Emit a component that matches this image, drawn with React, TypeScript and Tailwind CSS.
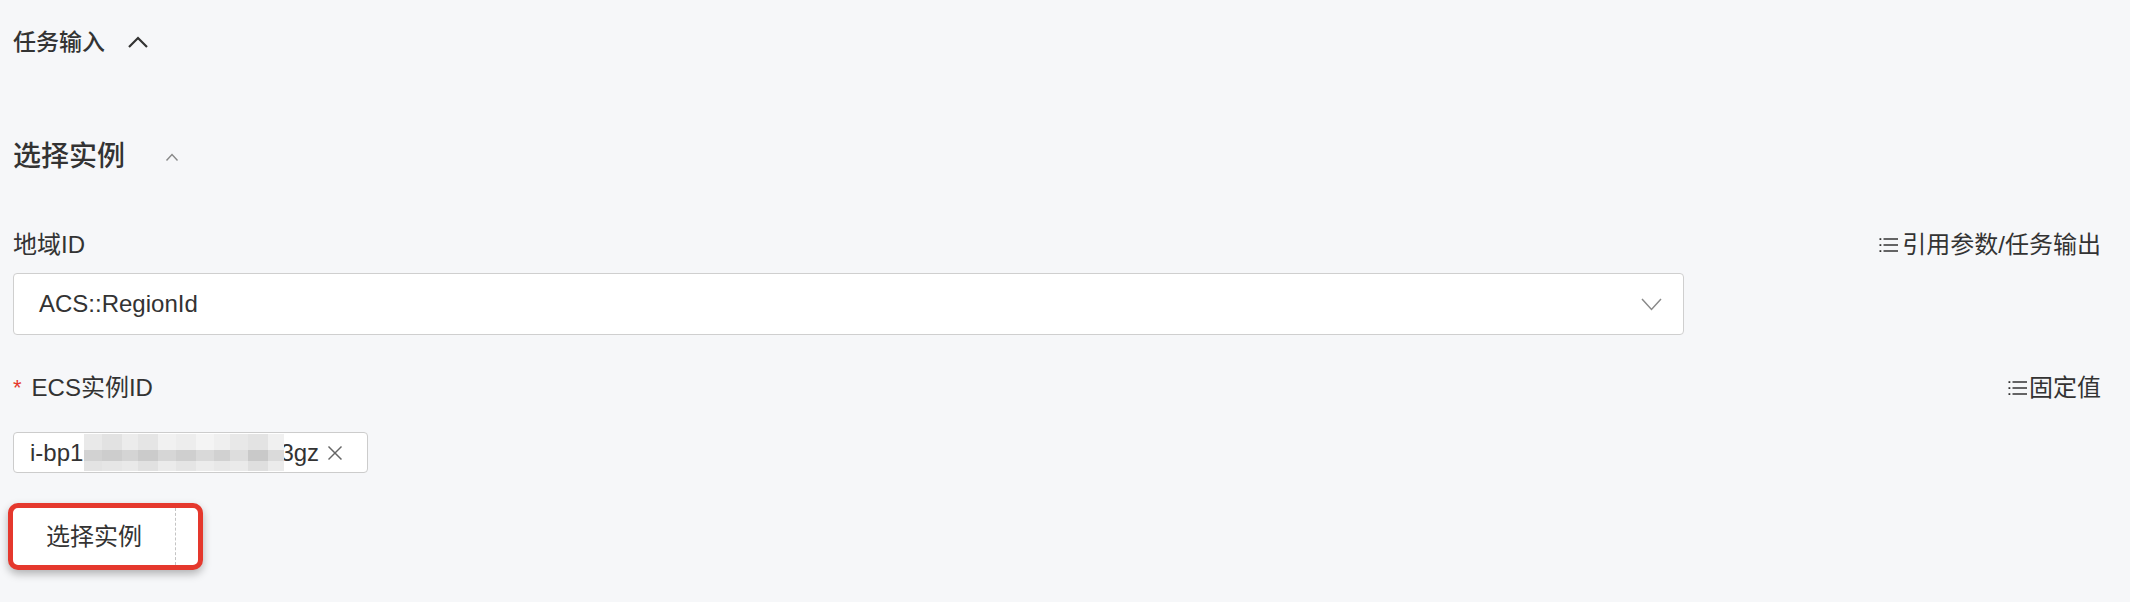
import React from 'react';

const mosaic = [
  { top: 'bg-[#e9e9e9]', mid: 'bg-[#d2d2d2]', bot: 'bg-[#e3e3e3]', w: 'w-[18px]' },
  { top: 'bg-[#e2e2e2]', mid: 'bg-[#cdcdcd]', bot: 'bg-[#e6e6e6]', w: 'w-[20px]' },
  { top: 'bg-[#ececec]', mid: 'bg-[#d4d4d4]', bot: 'bg-[#e9e9e9]', w: 'w-[16px]' },
  { top: 'bg-[#e5e5e5]', mid: 'bg-[#cbcbcb]', bot: 'bg-[#e1e1e1]', w: 'w-[20px]' },
  { top: 'bg-[#f1f1f1]', mid: 'bg-[#d6d6d6]', bot: 'bg-[#ebebeb]', w: 'w-[18px]' },
  { top: 'bg-[#ededed]', mid: 'bg-[#cfcfcf]', bot: 'bg-[#e5e5e5]', w: 'w-[20px]' },
  { top: 'bg-[#f4f4f4]', mid: 'bg-[#d9d9d9]', bot: 'bg-[#ececec]', w: 'w-[18px]' },
  { top: 'bg-[#efefef]', mid: 'bg-[#d1d1d1]', bot: 'bg-[#e8e8e8]', w: 'w-[16px]' },
  { top: 'bg-[#e8e8e8]', mid: 'bg-[#dddddd]', bot: 'bg-[#eaeaea]', w: 'w-[18px]' },
  { top: 'bg-[#e3e3e3]', mid: 'bg-[#c9c9c9]', bot: 'bg-[#dfdfdf]', w: 'w-[20px]' },
  { top: 'bg-[#f0f0f0]', mid: 'bg-[#dadada]', bot: 'bg-[#ebebeb]', w: 'w-[16px]' },
];

const ListIcon: React.FC = () => (
  <svg width="21" height="18" viewBox="0 0 21 18" className="shrink-0">
    <rect x="1.5" y="2.2" width="1.8" height="1.8" fill="#333" />
    <rect x="1.5" y="8.2" width="1.8" height="1.8" fill="#333" />
    <rect x="1.5" y="14.2" width="1.8" height="1.8" fill="#333" />
    <line x1="5.5" y1="3" x2="20" y2="3" stroke="#333" strokeWidth="1.5" />
    <line x1="5.5" y1="9" x2="20" y2="9" stroke="#333" strokeWidth="1.5" />
    <line x1="5.5" y1="15" x2="20" y2="15" stroke="#333" strokeWidth="1.5" />
  </svg>
);

const App: React.FC = () => {
  return (
    <div
      className="h-[602px] w-full bg-[#f6f7f9] pl-[13px] pr-[29px] text-[#333] overflow-hidden"
      style={{ fontFamily: '"Liberation Sans", "Noto Sans CJK SC", sans-serif' }}
    >
      {/* 任务输入 */}
      <div className="pt-[28px] flex items-center h-[56px]">
        <span className="text-[23px] leading-[28px] font-medium">任务输入</span>
        <svg width="22" height="14" viewBox="0 0 22 14" className="ml-[22px]">
          <polyline points="2,12 11,3 20,12" fill="none" stroke="#333" strokeWidth="2.2" />
        </svg>
      </div>

      {/* 选择实例 */}
      <div className="mt-[83px] flex items-center h-[36px]">
        <span className="text-[28px] leading-[36px] font-medium">选择实例</span>
        <svg width="14" height="10" viewBox="0 0 14 10" className="ml-[40px]">
          <polyline points="1.5,8.5 7,2.5 12.5,8.5" fill="none" stroke="#888" strokeWidth="1.4" />
        </svg>
      </div>

      {/* 地域ID */}
      <div className="mt-[56px] flex items-center justify-between h-[28px]">
        <span className="text-[24px] leading-[28px]">地域ID</span>
        <span className="flex items-center gap-[3px] text-[24px] leading-[28px]">
          <ListIcon />
          引用参数/任务输出
        </span>
      </div>
      <div className="mt-[14px] w-[1671px] h-[62px] bg-white border border-[#cfcfcf] rounded-[4px] flex items-center justify-between pl-[25px] pr-[21px]">
        <span className="text-[24px]">ACS::RegionId</span>
        <svg width="21" height="13" viewBox="0 0 21 13">
          <polyline points="1,1 10.5,11.5 20,1" fill="none" stroke="#8a8a8a" strokeWidth="1.5" />
        </svg>
      </div>

      {/* ECS实例ID */}
      <div className="mt-[39px] flex items-center justify-between h-[28px]">
        <span className="text-[24px] leading-[28px] flex items-center">
          <span className="text-[#e5382d] mr-[10px] text-[22px]">*</span>
          ECS实例ID
        </span>
        <span className="flex items-center gap-[1px] text-[24px] leading-[28px]">
          <ListIcon />
          固定值
        </span>
      </div>
      <div className="mt-[30px] w-[355px] h-[41px] bg-white border border-[#cccccc] rounded-[4px] flex items-center pl-[16px] text-[24px]">
        <span>i-bp1</span>
        <div className="flex h-[37px] relative z-10 ml-[1px]">
          {mosaic.map((m, i) => (
            <div key={i} className={`flex flex-col ${m.w}`}>
              <div className={`h-[16px] ${m.top}`} />
              <div className={`h-[11px] ${m.mid}`} />
              <div className={`h-[10px] ${m.bot}`} />
            </div>
          ))}
        </div>
        <span className="-ml-[4px]">3gz</span>
        <svg width="16" height="16" viewBox="0 0 16 16" className="ml-[8px]">
          <line x1="1.5" y1="1.5" x2="14.5" y2="14.5" stroke="#666" strokeWidth="1.5" />
          <line x1="14.5" y1="1.5" x2="1.5" y2="14.5" stroke="#666" strokeWidth="1.5" />
        </svg>
      </div>

      {/* 选择实例 button highlighted */}
      <div className="mt-[30px] -ml-[5px] w-[195px] h-[67px] border-[5px] border-[#e5382d] rounded-[10px] bg-white flex shadow-[0_4px_8px_rgba(0,0,0,0.28)]">
        <div className="w-[162px] flex items-center justify-center text-[24px]">选择实例</div>
        <div className="flex-1 border-l border-dashed border-[#c4c4c4]" />
      </div>
    </div>
  );
};

export default App;
